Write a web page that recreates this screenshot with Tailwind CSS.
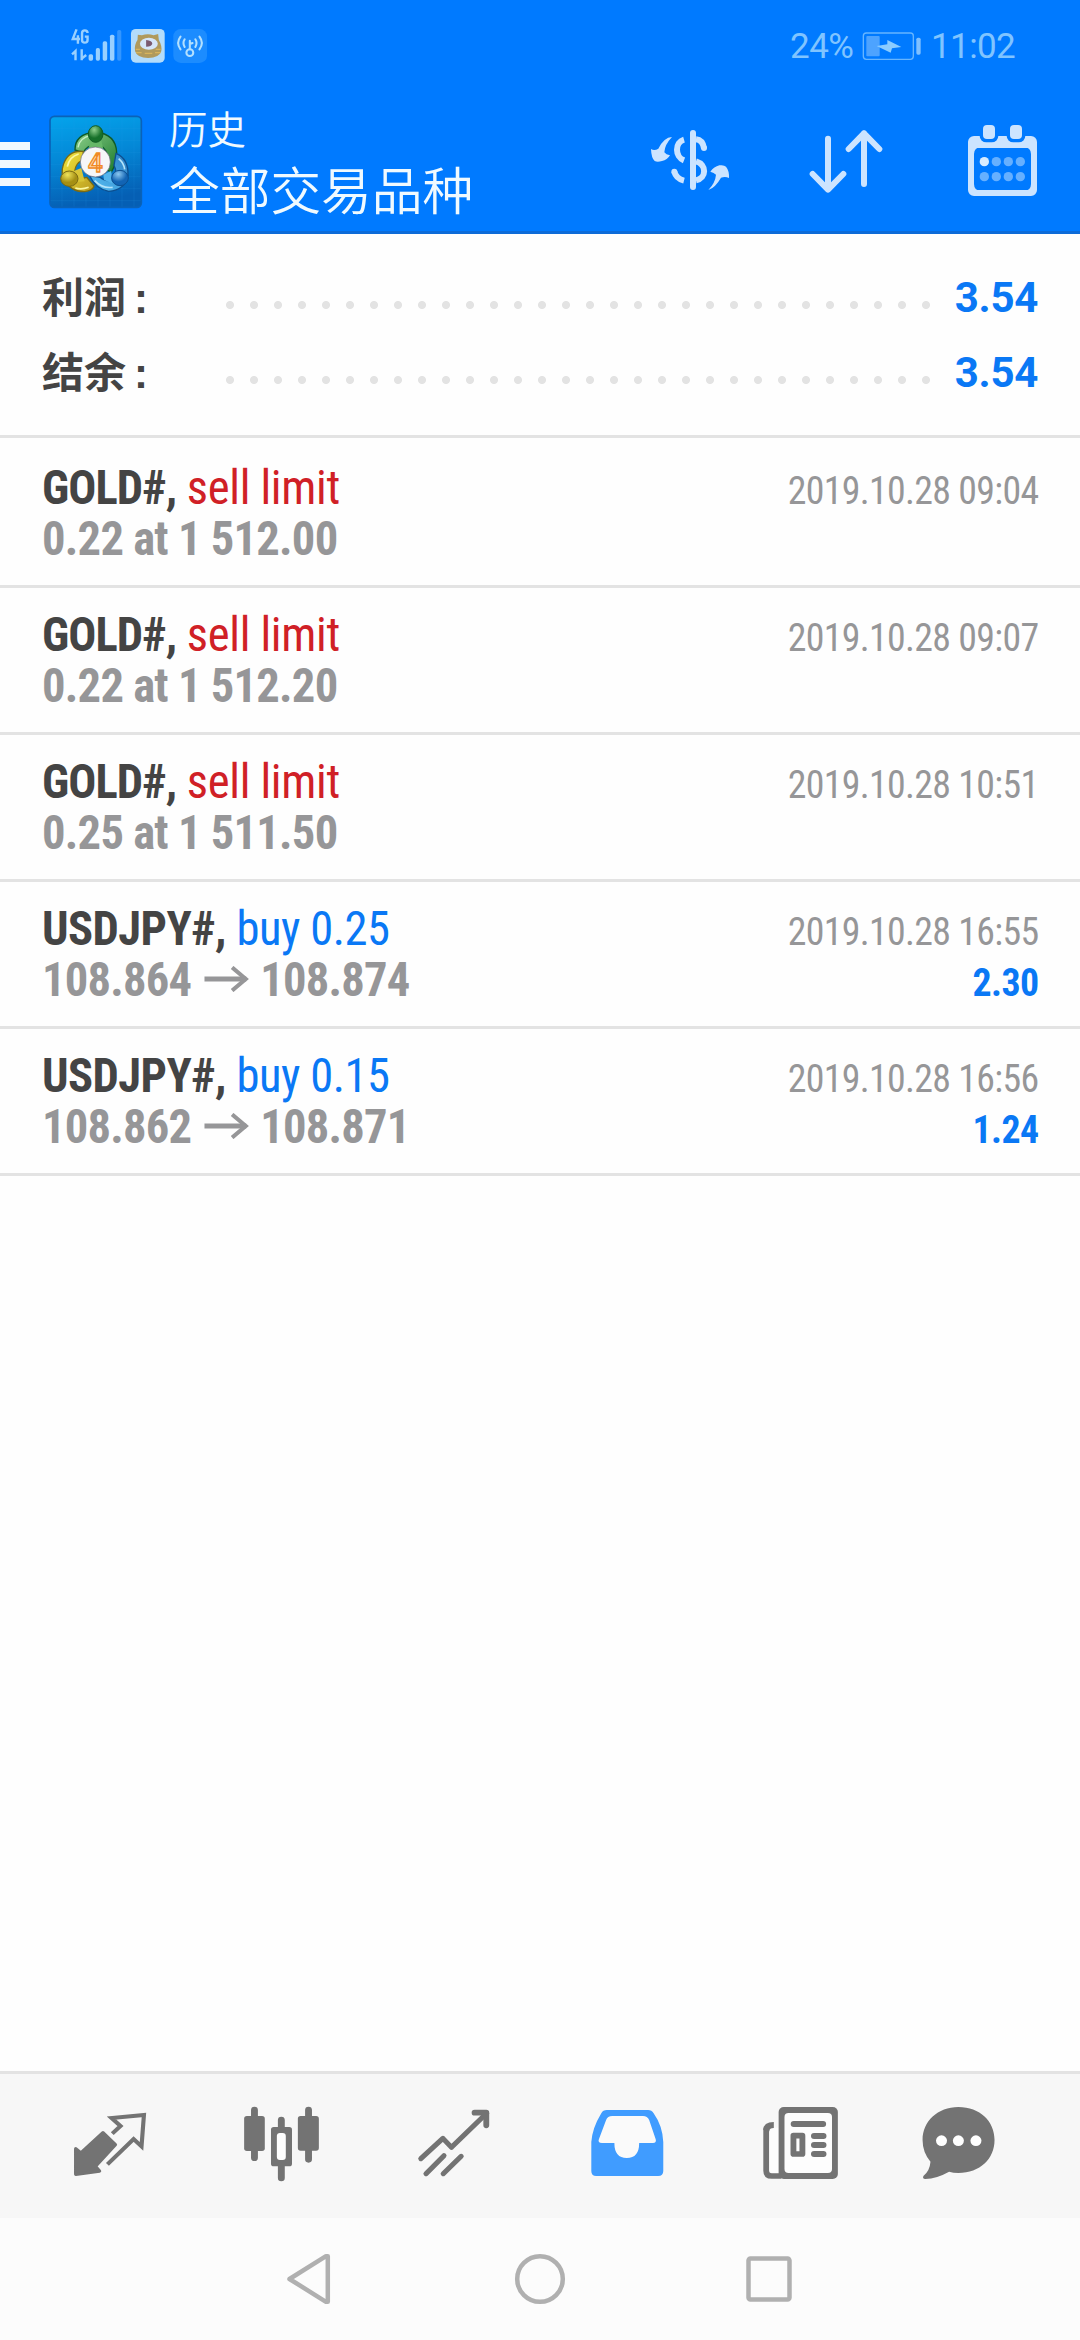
<!DOCTYPE html>
<html lang="zh-CN">
<head>
<meta charset="utf-8">
<title>历史</title>
<script src="https://cdn.jsdelivr.net/npm/@tailwindcss/browser@4"></script>
</head>
<body class="bg-[#fefefe] font-['Roboto','Noto_Sans_CJK_SC',sans-serif]">
<div class="flex flex-col w-[1080px] h-[2340px] overflow-hidden">

  <header class="h-[234px] shrink-0 bg-[#007aff] border-b-[3px] border-[#0d6bd8] flex flex-col">
    <!-- status bar -->
    <div class="h-[92px] flex items-center pl-[70px] pr-[66px] text-[#80c4ff] text-[35px] leading-none">
      <svg class="w-[140px] h-[40px]" viewBox="203 78 406.6 120" preserveAspectRatio="none">
        <g fill="none" stroke="#99d0ff" stroke-width="7">
          <path d="M222 88L211 117H232M226 106V131M254 99Q254 91 246 91Q238 91 238 99V120Q238 128 246 128Q254 128 254 120V110H246"/>
          <path d="M209 163L219 153V181M237 148V181M237 176L250 165"/>
        </g>
        <g fill="#99d0ff"><rect x="257" y="163" width="13" height="19" rx="5"/><rect x="278" y="144" width="12" height="38" rx="5"/><rect x="298" y="124" width="13" height="58" rx="5"/><rect x="319" y="104" width="13" height="78" rx="5"/></g>
        <rect x="340" y="90" width="12" height="92" rx="5" fill="#3396ff"/>
        <rect x="380" y="87" width="98" height="101" rx="14" fill="#b3dcfb"/>
        <path d="M400 104l12 2q17-6 34 0l13-4 2 18q10 18 7 34q-6 20-38 20t-38-20q-3-20 7-34z" fill="#b09a5c"/>
        <path d="M394 148h12M395 158h16M452 148h14M450 158h16M420 160h22" stroke="#d8b45c" stroke-width="4"/>
        <ellipse cx="432" cy="131" rx="26" ry="18" fill="#d6e6f8"/>
        <path d="M424 120q18 2 18 11q-2 9-18 9z" fill="#7b5a70"/>
        <rect x="503" y="87" width="98" height="102" rx="22" fill="#1c8cff"/>
        <g fill="none" stroke="#b3e0ff" stroke-width="6" stroke-linecap="round"><circle cx="551" cy="158" r="10"/><path d="M551 148V122M551 132l8-3M536 118q-7 11 0 23M524 110q-14 19 0 38M567 118q7 11 0 23M579 110q14 19 0 38"/></g>
      </svg>
      <span class="ml-auto w-[62px] whitespace-nowrap tracking-[-.5px]">24%</span>
      <svg class="w-[60px] h-[28px] ml-[10px]" viewBox="784 94 180 84">
        <rect x="788" y="97" width="150" height="79" rx="9" fill="none" stroke="#66b5ff" stroke-width="4"/>
        <rect x="797" y="106" width="40" height="61" rx="3" fill="#4da3ff"/>
        <path d="M828 136L860 131V118L902 139L874 143L870 156Z" fill="#8accff"/>
        <rect x="947" y="111" width="13" height="51" rx="5" fill="#80c0ff"/>
      </svg>
      <span class="ml-[9px] w-[83px] whitespace-nowrap tracking-[-.6px]">11:02</span>
    </div>
    <!-- toolbar -->
    <div class="h-[139px] flex items-start">
      <div class="mt-[50px] w-[30px] flex flex-col gap-[10px]">
        <i class="h-[8px] bg-[#f0f8ff]"></i><i class="h-[8px] bg-[#f0f8ff]"></i><i class="h-[8px] bg-[#f0f8ff]"></i>
      </div>
      <svg class="ml-[18px] mt-[22px] w-[96px] h-[96px]" viewBox="24 42 288 288">
        <defs>
          <linearGradient id="sky" x1="0" y1="0" x2=".2" y2="1"><stop offset="0" stop-color="#04a4ec"/><stop offset=".5" stop-color="#0487d6"/><stop offset="1" stop-color="#055fb4"/></linearGradient>
          <linearGradient id="gr" x1="0" y1="0" x2="1" y2="1"><stop offset="0" stop-color="#8cd08a"/><stop offset="1" stop-color="#1c7a2c"/></linearGradient>
          <linearGradient id="ye" x1="0" y1="0" x2="1" y2="1"><stop offset="0" stop-color="#f2e63a"/><stop offset="1" stop-color="#b99a20"/></linearGradient>
          <linearGradient id="bl" x1="0" y1="1" x2="1" y2="0"><stop offset="0" stop-color="#58c0f4"/><stop offset="1" stop-color="#2b7fc4"/></linearGradient>
          <radialGradient id="gb" cx=".4" cy=".25"><stop offset="0" stop-color="#8fd08c"/><stop offset="1" stop-color="#17702a"/></radialGradient>
          <radialGradient id="yb" cx=".4" cy=".25"><stop offset="0" stop-color="#f0e45a"/><stop offset="1" stop-color="#a58f14"/></radialGradient>
          <radialGradient id="bb" cx=".4" cy=".25"><stop offset="0" stop-color="#8cc8f0"/><stop offset="1" stop-color="#1264b4"/></radialGradient>
        </defs>
        <rect x="30" y="49" width="274" height="273" rx="13" fill="url(#sky)" stroke="#0a62b8" stroke-width="5"/>
        <path d="M66 52V320M102 52V320M138 52V320M174 52V320M210 52V320M246 52V320M282 52V320M32 86H302M32 122H302M32 158H302M32 194H302M32 230H302M32 266H302M32 302H302" stroke="#30a0e8" stroke-opacity=".22" stroke-width="2"/>
        <path d="M105 150Q104 102 166 96Q228 102 230 158Q230 190 214 216L196 208Q204 186 202 168Q198 136 166 134Q140 136 130 158Z" fill="url(#gr)" stroke="#0f5a28" stroke-width="4"/>
        <path d="M114 142Q118 114 152 106" fill="none" stroke="#c8efc4" stroke-width="4"/>
        <path d="M130 154Q84 150 70 194Q62 220 72 238Q92 276 134 275Q158 272 162 258L140 232Q112 240 104 214Q106 190 128 180Z" fill="url(#ye)" stroke="#7a6a14" stroke-width="4"/>
        <path d="M82 200Q88 170 116 162M106 264Q124 270 146 262" fill="none" stroke="#fbf7a0" stroke-width="5"/>
        <path d="M228 160Q266 176 264 226Q256 270 206 274Q168 268 148 226L180 232Q196 246 216 240Q236 222 222 196Z" fill="url(#bl)" stroke="#0c4f90" stroke-width="4"/>
        <path d="M164 242Q186 266 218 262M236 176Q252 190 254 208" fill="none" stroke="#b4e4fa" stroke-width="5"/>
        <path d="M150 122H184L190 146H146Z" fill="#66b868"/>
        <path d="M100 214L124 204L134 244L112 246Z" fill="#d8c436"/>
        <path d="M214 212L190 224L192 240L216 250Z" fill="#54b4ec"/>
        <ellipse cx="167" cy="102" rx="22" ry="25" fill="url(#gb)" stroke="#105c24" stroke-width="3"/>
        <ellipse cx="88" cy="236" rx="26" ry="23" fill="url(#yb)" stroke="#7a6a14" stroke-width="3"/>
        <ellipse cx="240" cy="234" rx="25" ry="23" fill="url(#bb)" stroke="#0c4f90" stroke-width="3"/>
        <circle cx="166" cy="186" r="45" fill="#f6f6f8" stroke="#667" stroke-width="2"/>
        <text x="166" y="215" font-family="Roboto" font-size="78" font-weight="500" text-anchor="middle" fill="#ffd9b0" stroke="#f08a24" stroke-width="4">4</text>
      </svg>
      <div class="ml-[25px] mt-[10px] flex flex-col text-[#f0faff] font-['Noto_Sans_CJK_SC',sans-serif] font-[350] whitespace-nowrap">
        <span class="text-[38.5px] leading-[50px]">历史</span>
        <span class="text-[50.7px] leading-[72px]">全部交易品种</span>
      </div>
      <svg class="ml-auto mt-[22px] w-[429px] h-[90px]" viewBox="153 342 1287 270" fill="#cce4ff">
        <!-- currency exchange -->
        <path d="M216 411Q192 412 175 446Q163 454 153 447Q154 474 164 483Q172 488 186 483Q202 480 210 466Q198 464 193 457Q194 434 216 411Z"/>
        <path d="M325 570Q346 563 363 533Q376 528 387 534Q388 512 378 500Q372 494 358 496Q342 500 331 515Q342 518 348 524Q346 548 325 570Z"/>
        <g fill="none" stroke="#cce4ff" stroke-width="18"><path d="M252 419C224 427 224 470 252 481M223 515Q228 536 252 542"/><path d="M288 418Q308 420 312 445M288 484C321 494 320 534 288 541"/></g>
        <circle cx="223" cy="515" r="9"/><circle cx="312" cy="444" r="9"/>
        <path d="M279 399V561M684 416V568M638 522L684 569L730 522M792 552V400M746 447L792 400L838 447" fill="none" stroke="#cce4ff" stroke-width="18" stroke-linecap="round" stroke-linejoin="round"/>
        <!-- calendar -->
        <rect x="1113" y="417" width="189" height="162" rx="9" fill="none" stroke="#cce4ff" stroke-width="18"/>
        <path d="M1113 417H1302V444H1113Z"/>
        <path d="M1122 462V440H1144Q1122 442 1122 462ZM1293 462V440H1271Q1293 442 1293 462ZM1122 552V574H1144Q1122 572 1122 552ZM1293 552V574H1271Q1293 572 1293 552Z"/>
        <rect x="1139" y="365" width="56" height="62" rx="20" fill="#007aff"/><rect x="1220" y="365" width="56" height="62" rx="20" fill="#007aff"/>
        <rect x="1149" y="375" width="36" height="42" rx="12"/><rect x="1230" y="375" width="36" height="42" rx="12"/>
        <circle cx="1153" cy="485" r="14" fill="#d8ecff"/>
        <g fill="#66b0ff"><circle cx="1189" cy="485" r="14"/><circle cx="1225" cy="485" r="14"/><circle cx="1261" cy="485" r="14"/><circle cx="1153" cy="530" r="14"/><circle cx="1189" cy="530" r="14"/><circle cx="1225" cy="530" r="14"/><circle cx="1261" cy="530" r="14"/></g>
      </svg>
    </div>
  </header>

  <section class="h-[204px] shrink-0 border-b-[3px] border-[#e3e3e3] pt-[26px] px-[42px] text-[42px] font-bold">
    <div class="h-[75px] flex items-center">
      <span class="w-[176px] mt-[2px] text-[#444] whitespace-nowrap">利润<span class="ml-[8px] font-['Liberation_Sans']">:</span></span>
      <i class="w-[720px] h-[24px] mt-[15px] bg-[radial-gradient(circle,#e3e3e3_3.6px,transparent_4.4px)] bg-[length:24px_24px]"></i>
      <span class="ml-auto text-[#0a78f5] tracking-[-.3px]">3.54</span>
    </div>
    <div class="h-[75px] flex items-center">
      <span class="w-[176px] mt-[2px] text-[#444] whitespace-nowrap">结余<span class="ml-[8px] font-['Liberation_Sans']">:</span></span>
      <i class="w-[720px] h-[24px] mt-[15px] bg-[radial-gradient(circle,#e3e3e3_3.6px,transparent_4.4px)] bg-[length:24px_24px]"></i>
      <span class="ml-auto text-[#0a78f5] tracking-[-.3px]">3.54</span>
    </div>
  </section>

  <main class="grow [font-family:'Roboto_Condensed','Roboto',sans-serif] [font-stretch:75%] leading-[51px] whitespace-nowrap">
    <div class="h-[150px] border-b-[3px] border-[#e3e3e3] pt-[24px] px-[42px] flex justify-between">
      <div class="text-[48px] origin-left scale-x-[.97]"><p><b class="text-[#444] tracking-[-1px]">GOLD#,</b> <span class="text-[#d02026] tracking-[-.3px]">sell limit</span></p><p class="font-bold text-[#969698] tracking-[-.76px]">0.22 at 1 512.00</p></div>
      <div class="text-[39px] text-right pt-[4px] origin-right scale-x-[.97]"><p class="text-[#969698] tracking-[-.7px]">2019.10.28 09:04</p></div>
    </div>
    <div class="h-[147px] border-b-[3px] border-[#e3e3e3] pt-[21px] px-[42px] flex justify-between">
      <div class="text-[48px] origin-left scale-x-[.97]"><p><b class="text-[#444] tracking-[-1px]">GOLD#,</b> <span class="text-[#d02026] tracking-[-.3px]">sell limit</span></p><p class="font-bold text-[#969698] tracking-[-.76px]">0.22 at 1 512.20</p></div>
      <div class="text-[39px] text-right pt-[4px] origin-right scale-x-[.97]"><p class="text-[#969698] tracking-[-.7px]">2019.10.28 09:07</p></div>
    </div>
    <div class="h-[147px] border-b-[3px] border-[#e3e3e3] pt-[21px] px-[42px] flex justify-between">
      <div class="text-[48px] origin-left scale-x-[.97]"><p><b class="text-[#444] tracking-[-1px]">GOLD#,</b> <span class="text-[#d02026] tracking-[-.3px]">sell limit</span></p><p class="font-bold text-[#969698] tracking-[-.76px]">0.25 at 1 511.50</p></div>
      <div class="text-[39px] text-right pt-[4px] origin-right scale-x-[.97]"><p class="text-[#969698] tracking-[-.7px]">2019.10.28 10:51</p></div>
    </div>
    <div class="h-[147px] border-b-[3px] border-[#e3e3e3] pt-[21px] px-[42px] flex justify-between">
      <div class="text-[48px] origin-left scale-x-[.97]"><p><b class="text-[#444] tracking-[-.6px]">USDJPY#,</b> <span class="text-[#0a78f5] tracking-[-.5px]">buy 0.25</span></p>
        <p class="font-bold text-[#969698] tracking-[-.8px] flex"><span>108.864</span><svg class="w-[47px] h-[26px] mt-[12px] ml-[13px] mr-[11px]" viewBox="0 0 46 26" fill="none" stroke="#969698"><path d="M0 13H43" stroke-width="5"/><path d="M28.500 1.500L42.500 13L28.500 24.500" stroke-width="4.200"/></svg><span>108.874</span></p></div>
      <div class="text-[39px] text-right pt-[4px] origin-right scale-x-[.97]"><p class="text-[#969698] tracking-[-.7px]">2019.10.28 16:55</p><p class="font-bold text-[#0a78f5] tracking-[-.6px]">2.30</p></div>
    </div>
    <div class="h-[147px] border-b-[3px] border-[#e3e3e3] pt-[21px] px-[42px] flex justify-between">
      <div class="text-[48px] origin-left scale-x-[.97]"><p><b class="text-[#444] tracking-[-.6px]">USDJPY#,</b> <span class="text-[#0a78f5] tracking-[-.5px]">buy 0.15</span></p>
        <p class="font-bold text-[#969698] tracking-[-.8px] flex"><span>108.862</span><svg class="w-[47px] h-[26px] mt-[12px] ml-[13px] mr-[11px]" viewBox="0 0 46 26" fill="none" stroke="#969698"><path d="M0 13H43" stroke-width="5"/><path d="M28.500 1.500L42.500 13L28.500 24.500" stroke-width="4.200"/></svg><span>108.871</span></p></div>
      <div class="text-[39px] text-right pt-[4px] origin-right scale-x-[.97]"><p class="text-[#969698] tracking-[-.7px]">2019.10.28 16:56</p><p class="font-bold text-[#0a78f5] tracking-[-.6px]">1.24</p></div>
    </div>
  </main>

  <nav class="h-[147px] shrink-0 border-t-[3px] border-[#e3e3e3] bg-[#f7f7f7] px-6 grid grid-cols-6">
    <svg class="w-[172px] h-[144px]" viewBox="69.7 42 499.5 432" preserveAspectRatio="none">
      <path d="M220 266L235 279L299 218L335 254L277 319L289 333L220 343Z" fill="#737373" stroke="#737373" stroke-width="10" stroke-linejoin="round"/>
      <path d="M326 221L350 198L324 174L418 165L411 259L388 237L312 313" fill="none" stroke="#737373" stroke-width="12"/>
    </svg>
    <svg class="w-[172px] h-[144px]" viewBox="569.2 42 499.5 432" preserveAspectRatio="none">
      <path d="M739 150V293M896 150V298M817 180V205M817 315V354" stroke="#737373" stroke-width="20" stroke-linecap="round"/>
      <rect x="709" y="168" width="60" height="105" rx="8" fill="#737373"/><rect x="865" y="168" width="61" height="104" rx="8" fill="#737373"/>
      <rect x="787" y="201" width="61" height="118" rx="8" fill="#737373"/><rect x="804" y="219" width="26" height="81" rx="9" fill="#fdfdfd"/>
    </svg>
    <svg class="w-[172px] h-[144px]" viewBox="1067.5 42 499.5 432" preserveAspectRatio="none">
      <path d="M1221 296L1285 235L1310 262L1412 160M1236 341L1288 287M1286 341L1338 289" fill="none" stroke="#737373" stroke-width="15" stroke-linecap="round" stroke-linejoin="round"/>
      <path d="M1377 158H1411V196" fill="none" stroke="#737373" stroke-width="17" stroke-linecap="round" stroke-linejoin="round"/>
    </svg>
    <svg class="w-[172px] h-[144px]" viewBox="-2 42 499.5 432" preserveAspectRatio="none">
      <path d="M192 150H312Q322 150 328 160Q354 198 356 246V333Q356 348 341 348H161Q147 348 147 333V246Q150 204 176 160Q181 150 192 150Z" fill="#409cff"/>
      <path d="M208 168H297Q310 168 315 180L334 238Q337 249 326 249H286Q286 294 250 294Q214 294 214 249H178Q165 249 169 238L190 180Q194 168 208 168Z" fill="#fafafa"/>
    </svg>
    <svg class="w-[172px] h-[144px]" viewBox="497.5 42 499.5 432" preserveAspectRatio="none">
      <path d="M655 205V332Q655 348 671 348H699" fill="none" stroke="#737373" stroke-width="17"/>
      <path d="M664 210Q664 203 677 203H691V339H677Q664 339 664 329Z" fill="#fdfdfd"/>
      <path d="M677 186V204Q664 204 664 214L646.500 210Q646.500 186 677 186Z" fill="#737373"/>
      <rect x="691" y="141" width="172" height="216" rx="15" fill="#737373"/><rect x="708" y="159" width="138" height="180" rx="12" fill="#fdfdfd"/>
      <path d="M735 192H820M794 228H821M794 255H821M794 282H821" stroke="#737373" stroke-width="18" stroke-linecap="round"/>
      <rect x="734" y="227" width="26" height="55" fill="#fdfdfd" stroke="#737373" stroke-width="17" stroke-linejoin="round"/>
    </svg>
    <svg class="w-[172px] h-[144px]" viewBox="997 42 499.5 432" preserveAspectRatio="none">
      <path d="M1213 141C1276 141 1318 184 1318 240S1276 339 1213 339Q1198 339 1186 335Q1150 356 1117 357Q1107 355 1112 347Q1130 332 1132 305Q1109 277 1109 240C1109 184 1153 141 1213 141Z" fill="#737373"/>
      <circle cx="1164" cy="242" r="16" fill="#fff"/><circle cx="1213" cy="242" r="16" fill="#fff"/><circle cx="1264" cy="242" r="16" fill="#fff"/>
    </svg>
  </nav>

  <div class="h-[122px] shrink-0 bg-[#fcfcfc] flex justify-center items-center">
    <svg class="w-[230px] h-[60px]" viewBox="-115 -30 230 60" fill="none" stroke="#b0b0b0" stroke-width="4.500" stroke-linejoin="round"><path d="M-20.500 0L16 -22.800H17.800V22.800H16Z"/></svg>
    <svg class="w-[230px] h-[60px]" viewBox="-115 -30 230 60" fill="none" stroke="#b0b0b0" stroke-width="4.500"><circle r="22.800"/></svg>
    <svg class="w-[230px] h-[60px]" viewBox="-115 -30 230 60" fill="none" stroke="#b0b0b0" stroke-width="4.500"><rect x="-21.500" y="-20.500" width="41" height="41" rx="2"/></svg>
  </div>
</div>
</body>
</html>
